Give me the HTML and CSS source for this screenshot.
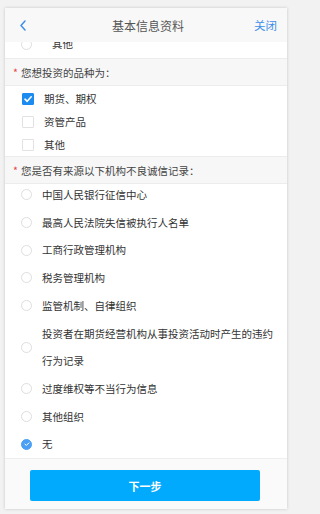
FILE: index.html
```html
<!DOCTYPE html>
<html lang="zh">
<head>
<meta charset="utf-8">
<title>基本信息资料</title>
<link rel="stylesheet" href="styles.css">
</head>
<body>
<div class="card">
  <div class="header">
    <span class="back"><svg width="8" height="11" viewBox="0 0 8 11"><path d="M6 1 L2 5.5 L6 10" fill="none" stroke="#3f8fe8" stroke-width="1.5" stroke-linecap="round" stroke-linejoin="round"/></svg></span>
    <span class="title">基本信息资料</span>
    <span class="close">关闭</span>
  </div>
  <div class="content">
    <div class="row radio-row first"><span class="radio"></span><span class="label">其他</span></div>
    <div class="section"><span class="star">*</span>您想投资的品种为：</div>
    <div class="checks">
      <div class="row check-row"><span class="box checked"><svg width="10" height="10" viewBox="0 0 10 10"><path d="M2 5.2 L4.2 7.3 L8.2 2.8" fill="none" stroke="#fff" stroke-width="1.6" stroke-linecap="round" stroke-linejoin="round"/></svg></span><span class="label">期货、期权</span></div>
      <div class="row check-row"><span class="box"></span><span class="label">资管产品</span></div>
      <div class="row check-row"><span class="box"></span><span class="label">其他</span></div>
    </div>
    <div class="section"><span class="star">*</span>您是否有来源以下机构不良诚信记录：</div>
    <div class="radios">
      <div class="row radio-row"><span class="radio"></span><span class="label">中国人民银行征信中心</span></div>
      <div class="row radio-row"><span class="radio"></span><span class="label">最高人民法院失信被执行人名单</span></div>
      <div class="row radio-row"><span class="radio"></span><span class="label">工商行政管理机构</span></div>
      <div class="row radio-row"><span class="radio"></span><span class="label">税务管理机构</span></div>
      <div class="row radio-row"><span class="radio"></span><span class="label">监管机制、自律组织</span></div>
      <div class="row radio-row"><span class="radio"></span><span class="label">投资者在期货经营机构从事投资活动时产生的违约行为记录</span></div>
      <div class="row radio-row"><span class="radio"></span><span class="label">过度维权等不当行为信息</span></div>
      <div class="row radio-row"><span class="radio"></span><span class="label">其他组织</span></div>
      <div class="row radio-row"><span class="radio on"><svg width="8" height="8" viewBox="0 0 8 8"><path d="M2 4.2 L3.4 5.4 L6 2.8" fill="none" stroke="#fff" stroke-width="1" stroke-linecap="round" stroke-linejoin="round"/></svg></span><span class="label">无</span></div>
    </div>
  </div>
  <div class="footer">
    <button class="next">下一步</button>
  </div>
</div>
</body>
</html>
```
FILE: styles.css
```css
html, body {
  margin: 0;
  padding: 0;
}
body {
  background: #f2f2f2;
  padding: 8px 5px 5px 5px;
  font-family: "Noto Sans CJK SC", "Noto Sans", sans-serif;
  box-sizing: border-box;
  height: 514px;
}
.card {
  width: 282px;
  height: 501px;
  background: #fff;
  box-shadow: 0 0 3px rgba(0, 0, 0, 0.18);
  display: flex;
  flex-direction: column;
  overflow: hidden;
}
.header {
  height: 34px;
  flex: none;
  background: #f8f8f8;
  display: flex;
  align-items: center;
  justify-content: space-between;
  padding: 0 10px 0 14px;
  position: relative;
  z-index: 1;
}
.back {
  display: flex;
  width: 30px;
}
.title {
  font-size: 12px;
  color: #555;
}
.close {
  font-size: 11.5px;
  color: #3f8fe8;
  width: 30px;
  text-align: right;
}
.content {
  flex: 1;
  overflow: hidden;
}
.row {
  display: flex;
  align-items: center;
  font-size: 10.5px;
  color: #333;
}
.first {
  margin-top: -12px;
  height: 28px;
  padding-left: 16px;
}
.first .label {
  padding-left: 10px;
}
.section {
  height: 26px;
  display: flex;
  align-items: center;
  background: #f7f7f7;
  border-top: 1px solid #ececec;
  border-bottom: 1px solid #ececec;
  font-size: 10.5px;
  color: #444;
  padding-left: 8px;
}
.star {
  color: #e84444;
  margin-right: 3px;
}
.checks {
  padding-top: 1px;
}
.check-row {
  height: 23px;
  padding-left: 17px;
}
.box {
  width: 12px;
  height: 12px;
  box-sizing: border-box;
  border: 1px solid #e2e2e2;
  border-radius: 1px;
  display: flex;
  align-items: center;
  justify-content: center;
  flex: none;
}
.box.checked {
  background: #1d8cf0;
  border-color: #1d8cf0;
}
.check-row .label {
  margin-left: 10px;
}
.radios {
  margin-top: -3px;
}
.radio-row {
  line-height: 27.7px;
  padding-left: 16px;
  padding-right: 12px;
}
.radio {
  width: 11px;
  height: 11px;
  box-sizing: border-box;
  border: 1px solid #dedede;
  border-radius: 50%;
  flex: none;
  display: flex;
  align-items: center;
  justify-content: center;
}
.radio.on {
  background: #4a9ff5;
  border-color: #4a9ff5;
}
.radio-row .label {
  margin-left: 10px;
}
.footer {
  height: 51px;
  flex: none;
  box-sizing: border-box;
  border-top: 1px solid #eeeeee;
  background: #fafafa;
  padding: 11px 27px 0 25px;
}
.next {
  display: block;
  width: 100%;
  height: 31px;
  border: none;
  border-radius: 2px;
  background: #02aafe;
  color: #fff;
  font-family: "Noto Sans CJK SC", sans-serif;
  font-size: 11px;
  font-weight: bold;
  padding: 0;
}
```
